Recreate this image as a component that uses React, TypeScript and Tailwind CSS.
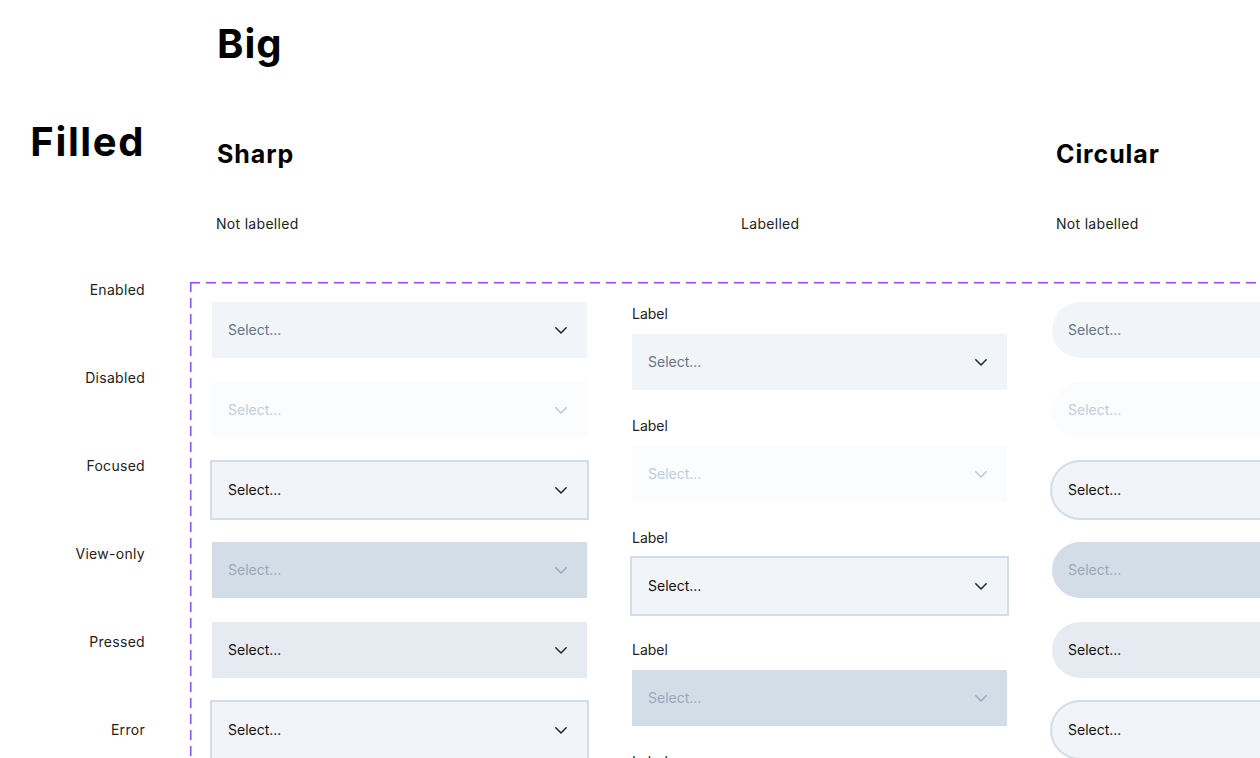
import React from "react";

type State = "enabled" | "disabled" | "focused" | "viewonly" | "pressed" | "error";

const STYLES: Record<State, { box: string; text: string; chev: string }> = {
  enabled: { box: "bg-[#F1F5F9]", text: "text-[#62748A]", chev: "text-[#1E2633]" },
  disabled: { box: "bg-[#FBFCFD]", text: "text-[#C0CDDC]", chev: "text-[#BAC7D6]" },
  focused: { box: "bg-[#F1F5F9] ring-2 ring-[#D3DDE8]", text: "text-[#111111]", chev: "text-[#1E2633]" },
  viewonly: { box: "bg-[#D3DDE7]", text: "text-[#97A8BC]", chev: "text-[#97A8BC]" },
  pressed: { box: "bg-[#E6EBF2]", text: "text-[#111111]", chev: "text-[#1E2633]" },
  error: { box: "bg-[#F1F5F9] ring-2 ring-[#D3DDE8]", text: "text-[#111111]", chev: "text-[#1E2633]" },
};

const STATES: State[] = ["enabled", "disabled", "focused", "viewonly", "pressed", "error"];
const ROW_LABELS = ["Enabled", "Disabled", "Focused", "View-only", "Pressed", "Error"];

function Chevron({ className }: { className: string }) {
  return (
    <svg width="12" height="7" viewBox="0 0 12 7" fill="none" className={className}>
      <path d="M0.8 0.8 L6 6 L11.2 0.8" stroke="currentColor" strokeWidth="1.5" strokeLinecap="round" strokeLinejoin="round" />
    </svg>
  );
}

function Select({ state, round }: { state: State; round?: boolean }) {
  const s = STYLES[state];
  return (
    <div
      className={`w-[375px] h-[56px] shrink-0 flex items-center justify-between pl-4 pr-5 ${s.box} ${round ? "rounded-full" : ""}`}
    >
      <span className={`text-[14px] leading-5 ${s.text}`}>Select...</span>
      <Chevron className={s.chev} />
    </div>
  );
}

export default function App() {
  return (
    <div className="w-[1260px] h-[758px] overflow-hidden bg-white flex font-['Inter',sans-serif] text-[#1a1a1a]">
      {/* Left column */}
      <div className="w-[190px] shrink-0 flex flex-col items-end pr-[45px]">
        <div className="mt-[122px] text-[40px] leading-none font-bold text-black tracking-[1.6px]">Filled</div>
        <div className="mt-[118px] flex flex-col items-end">
          {ROW_LABELS.map((l) => (
            <div key={l} className="h-[88px] text-[14px] leading-5 text-[#222] tracking-[0.3px]">
              {l}
            </div>
          ))}
        </div>
      </div>

      {/* Right area */}
      <div className="flex-1 flex flex-col min-w-0">
        <div className="mt-[24px] pl-[27px] text-[40px] leading-none font-bold text-black tracking-[1px]">Big</div>

        <div className="mt-[78px] flex text-[25px] leading-none font-bold text-black tracking-[0.9px]">
          <div className="w-[866px] shrink-0 pl-[27px]">Sharp</div>
          <div>Circular</div>
        </div>

        <div className="mt-[47px] flex text-[14px] leading-5 text-[#222] tracking-[0.3px]">
          <div className="w-[551px] shrink-0 pl-[26px]">Not labelled</div>
          <div className="w-[315px] shrink-0">Labelled</div>
          <div>Not labelled</div>
        </div>

        {/* Dashed area */}
        <div className="relative mt-[48px] flex-1 pl-[22px] pt-[20px] flex gap-[45px]">
          <svg className="absolute inset-0 w-full h-full pointer-events-none" fill="none">
            <line x1="0" y1="0.75" x2="100%" y2="0.75" stroke="#9747FF" strokeWidth="1.5" strokeDasharray="10 6" />
            <line x1="0.75" y1="0" x2="0.75" y2="100%" stroke="#9747FF" strokeWidth="1.5" strokeDasharray="10 6" />
          </svg>

          {/* Sharp, not labelled */}
          <div className="flex flex-col gap-6 shrink-0">
            {STATES.map((st) => (
              <Select key={st} state={st} />
            ))}
          </div>

          {/* Sharp, labelled */}
          <div className="flex flex-col gap-[26px] shrink-0 pt-[2px]">
            {STATES.map((st) => (
              <div key={st} className="flex flex-col gap-[10px]">
                <div className="text-[14px] leading-5 text-[#222]">Label</div>
                <Select state={st} />
              </div>
            ))}
          </div>

          {/* Circular, not labelled */}
          <div className="flex flex-col gap-6 shrink-0">
            {STATES.map((st) => (
              <Select key={st} state={st} round />
            ))}
          </div>
        </div>
      </div>
    </div>
  );
}
